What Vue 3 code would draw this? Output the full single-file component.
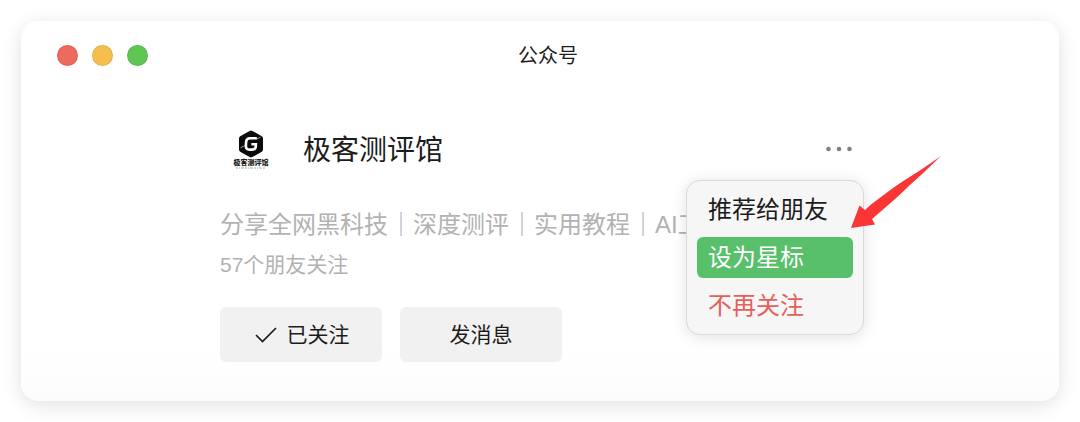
<script setup>
import { ref } from 'vue'

const account = '极客测评馆'
const topics = ['分享全网黑科技', '深度测评', '实用教程', 'AI工']
const actions = [
  { id: 'share', label: '推荐给朋友' },
  { id: 'star', label: '设为星标' },
  { id: 'unfollow', label: '不再关注', danger: true },
]
const active = ref('star')
</script>

<template>
  <div class="page">
    <section class="window">
      <header class="titlebar">
        <div class="lights">
          <span class="light red"></span>
          <span class="light yellow"></span>
          <span class="light green"></span>
        </div>
        <h1 class="title">公众号</h1>
      </header>

      <main class="profile">
        <div class="head">
          <div class="logo">
            <svg class="logo-mark" viewBox="0 0 26 28" aria-hidden="true">
              <path d="M11.6 .9Q13 .1 14.4 .9L23.8 6.200Q25 7 25 8.400V19.600Q25 21 23.800 21.800L14.400 27.100Q13 27.900 11.600 27.100L2.200 21.800Q1 21 1 19.600V8.400Q1 7 2.200 6.200Z" fill="#0b0b0b" />
              <path d="M18.800 8.200H12.200Q8.400 8.200 8.100 11.800L7.900 15.600Q7.800 19.600 11.300 19.600H14.200Q17.600 19.600 17.800 16.400L17.900 14.200H13.400" fill="none" stroke="#fff" stroke-width="2.600" />
              <path d="M2.500 17.800L7.500 15.300M18.500 9.200L22.500 7.200" stroke="#fff" stroke-width=".6" />
            </svg>
            <span class="logo-name">{{ account }}</span>
            <svg class="logo-line" viewBox="0 0 30 2" aria-hidden="true">
              <path d="M0 1H30" stroke="#aaa" stroke-width="1" stroke-dasharray="2 1 1 1 3 1" />
            </svg>
          </div>
          <h2 class="name">{{ account }}</h2>
          <div class="more">
            <button class="more-button" type="button" aria-label="更多" aria-haspopup="menu">
              <svg viewBox="0 0 28 8" aria-hidden="true">
                <circle cx="3.500" cy="4" r="2.300" />
                <circle cx="14" cy="4" r="2.300" />
                <circle cx="24.500" cy="4" r="2.300" />
              </svg>
            </button>
            <div class="menu" role="menu">
              <button
                v-for="item in actions"
                :key="item.id"
                type="button"
                role="menuitem"
                class="menu-item"
                :class="{ danger: item.danger, active: active === item.id }"
                @mouseenter="active = item.id"
              >{{ item.label }}</button>
            </div>
            <svg class="arrow" viewBox="0 0 92 74" aria-hidden="true">
              <path d="M91 1L71 14.700L51 27.500L43 33L21 49.500L15 55L9.500 50.500L1 73L25 69.500L22 64L44 45L51 38.500L61 29L71 20Z" fill="#fb3434" />
            </svg>
          </div>
        </div>

        <p class="topics">
          <template v-for="(topic, i) in topics" :key="topic">
            <span v-if="i" class="bar">｜</span><span>{{ topic }}</span>
          </template>
        </p>
        <p class="friends">57个朋友关注</p>

        <div class="buttons">
          <button class="button" type="button">
            <svg class="check" viewBox="0 0 22 18" aria-hidden="true">
              <path d="M1 9L7.500 15.500L21 2" fill="none" stroke="#1c1c1c" stroke-width="1.700" />
            </svg>
            已关注
          </button>
          <button class="button" type="button">发消息</button>
        </div>
      </main>
    </section>
  </div>
</template>

<style>
body {
  background: #fff;
}
</style>

<style scoped>
.page {
  padding: 21px;
  font-family: "Liberation Sans", "Noto Sans CJK SC", sans-serif;
  color: #1c1c1c;
}
.window {
  padding-bottom: 39px;
  border-radius: 18px;
  background: linear-gradient(#fff 85%, #fcfcfc);
  box-shadow: 0 4px 20px rgba(0, 0, 0, 0.12);
}
.titlebar {
  display: grid;
  grid-template-columns: 1fr auto 1fr;
  align-items: center;
  height: 68px;
  padding: 0 20px 0 36px;
}
.lights {
  display: flex;
  gap: 14px;
}
.light {
  box-sizing: border-box;
  width: 21px;
  height: 21px;
  border: 1px solid rgba(0, 0, 0, 0.08);
  border-radius: 50%;
}
.red { background: #ed6a5e; }
.yellow { background: #f4bf4f; }
.green { background: #61c554; }
.title {
  margin: 0;
  padding-top: 2px;
  font-size: 20px;
  line-height: 28px;
  font-weight: 400;
}
.profile {
  max-width: 640px;
  margin: 0 auto;
  padding-top: 29px;
}
.head {
  display: flex;
  align-items: center;
  height: 62px;
}
.logo {
  display: flex;
  flex-direction: column;
  align-items: center;
  width: 62px;
  margin-right: 21px;
}
.logo-mark {
  width: 26px;
  height: 28px;
}
.logo-name {
  font-size: 7px;
  line-height: 9px;
  font-weight: 900;
}
.logo-line {
  width: 30px;
  height: 2px;
}
.name {
  margin: 0;
  padding-top: 3px;
  font-size: 28px;
  line-height: 40px;
  font-weight: 400;
}
.more {
  position: relative;
  margin-left: auto;
  margin-right: 7px;
}
.more-button {
  display: block;
  padding: 0;
  border: 0;
  background: none;
}
.more-button svg {
  display: block;
  width: 28px;
  height: 8px;
  fill: #808080;
}
.menu {
  position: absolute;
  top: 35px;
  right: -11px;
  display: flex;
  flex-direction: column;
  gap: 7px;
  box-sizing: border-box;
  width: 178px;
  padding: 8px 10px;
  border: 1px solid #d9d9d9;
  border-radius: 14px;
  background: #f6f6f6;
  box-shadow: 0 2px 16px rgba(0, 0, 0, 0.12);
}
.menu-item {
  height: 41px;
  padding: 0 11px;
  border: 0;
  border-radius: 6px;
  background: none;
  color: #1c1c1c;
  font: inherit;
  font-size: 24px;
  line-height: 42px;
  text-align: left;
  white-space: nowrap;
}
.danger { color: #e5605a; }
.active {
  background: #58bf6a;
  color: #fff;
}
.arrow {
  position: absolute;
  top: 10px;
  right: -89px;
  width: 92px;
  height: 74px;
  pointer-events: none;
}
.topics {
  display: flex;
  margin: 27px 0 0;
  color: #b2b2b2;
  font-size: 24px;
  line-height: 36px;
  white-space: nowrap;
}
.bar {
  width: 25px;
  text-align: right;
}
.friends {
  margin: 7px 0 0;
  color: #b2b2b2;
  font-size: 21px;
  line-height: 30px;
}
.buttons {
  display: flex;
  gap: 18px;
  margin-top: 27px;
}
.button {
  display: flex;
  align-items: center;
  justify-content: center;
  gap: 10px;
  width: 162px;
  height: 55px;
  padding: 0 0 4px;
  border: 0;
  border-radius: 6px;
  background: #f1f1f1;
  color: #1c1c1c;
  font: inherit;
  font-size: 21px;
}
.check {
  width: 22px;
  height: 18px;
  margin: 4px 0 0 2px;
}
</style>
